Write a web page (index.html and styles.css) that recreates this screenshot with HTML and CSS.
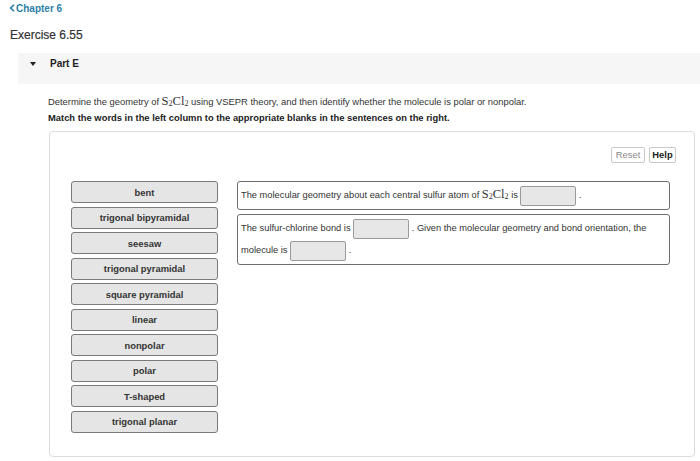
FILE: index.html
```html
<!DOCTYPE html>
<html>
<head>
<meta charset="utf-8">
<link rel="stylesheet" href="styles.css">
</head>
<body>
<div class="page">
  <a class="chapter" href="#"><svg class="chev" width="6" height="8" viewBox="0 0 6 8"><path d="M5 0.8 L1.6 4 L5 7.2" fill="none" stroke="#2e7fa9" stroke-width="1.6"/></svg>Chapter 6</a>
  <h1 class="exercise">Exercise 6.55</h1>
  <div class="part">
    <span class="tri"></span><span class="part-title">Part E</span>
  </div>
  <div class="content">
    <p class="prompt">Determine the geometry of <span class="chem">S<sub>2</sub>Cl<sub>2</sub></span> using VSEPR theory, and then identify whether the molecule is polar or nonpolar.</p>
    <p class="instr">Match the words in the left column to the appropriate blanks in the sentences on the right.</p>
    <div class="panel">
      <div class="tools">
        <button class="btn reset">Reset</button>
        <button class="btn help">Help</button>
      </div>
      <div class="work">
        <div class="words">
          <div class="word">bent</div>
          <div class="word">trigonal bipyramidal</div>
          <div class="word">seesaw</div>
          <div class="word">trigonal pyramidal</div>
          <div class="word">square pyramidal</div>
          <div class="word">linear</div>
          <div class="word">nonpolar</div>
          <div class="word">polar</div>
          <div class="word">T-shaped</div>
          <div class="word">trigonal planar</div>
        </div>
        <div class="sentences">
          <div class="sentence one"><span class="t">The molecular geometry about each central sulfur atom of <span class="chem">S<sub>2</sub>Cl<sub>2</sub></span> is </span><span class="blank"></span><span class="t"> .</span></div>
          <div class="sentence two"><span class="t">The sulfur-chlorine bond is </span><span class="blank"></span><span class="t"> . Given the molecular geometry and bond orientation, the</span> <span class="t">molecule is </span><span class="blank"></span><span class="t"> .</span></div>
        </div>
      </div>
    </div>
  </div>
</div>
</body>
</html>
```
FILE: styles.css
```css
* { box-sizing: border-box; }
html, body { margin: 0; padding: 0; background: #fff; }
body { font-family: "Liberation Sans", Arial, sans-serif; color: #333; }
.page { width: 700px; height: 461px; overflow: hidden; }

.chapter {
  display: flex; align-items: center; gap: 1px;
  margin: 2px 0 0 9px; height: 12px;
  color: #2e7fa9; font-weight: bold; font-size: 10px; text-decoration: none;
}
.chev { display: block; }

.exercise {
  margin: 14px 0 0 10px; font-size: 12px; font-weight: normal; color: #333;
  line-height: 14px; -webkit-text-stroke: 0.2px #333;
}

.part {
  margin: 11px 0 0 18px; height: 31px; background: #f6f6f6;
  display: flex; align-items: flex-start; padding: 4px 0 0 12px;
}
.tri {
  width: 0; height: 0; margin-top: 5px;
  border-left: 3px solid transparent; border-right: 3px solid transparent;
  border-top: 4px solid #222;
}
.part-title { margin-left: 14px; font-size: 10px; font-weight: bold; color: #222; line-height: 14px; }

.content { margin-left: 48px; }
.prompt { margin: 10px 0 0 0; font-size: 9.4px; line-height: 15px; height: 15px; color: #333; }
.instr { margin: 3px 0 0 0; font-size: 9.4px; font-weight: bold; line-height: 12px; height: 12px; color: #222; }
.chem { font-family: "Liberation Serif", "Times New Roman", serif; font-size: 12.5px; line-height: 1; }
.chem sub { font-size: 8px; vertical-align: -1px; line-height: 1; }

.panel {
  margin: 7px 0 0 1px; width: 646px; height: 326px;
  border: 1px solid #dcdcdc; border-radius: 4px;
  padding: 15px 18px 0 21px;
}
.tools { display: flex; justify-content: flex-end; gap: 4px; }
.btn {
  height: 16px; padding: 0 2px; font-family: inherit; font-size: 9.4px;
  background: #fff; border: 1px solid #c8c8c8; border-radius: 2px;
  line-height: 14px;
}
.reset { color: #8a8a8a; width: 34px; }
.help { color: #222; font-weight: bold; width: 27px; }

.work { display: flex; gap: 19px; margin-top: 18px; padding-right: 6px; }
.words { width: 147px; display: flex; flex-direction: column; gap: 3.56px; }
.word {
  height: 22px; background: #e5e5e5; border: 1.5px solid #7a7a7a; border-radius: 3px;
  display: flex; align-items: center; justify-content: center;
  font-size: 9.4px; font-weight: bold; color: #333;
}
.sentences { flex: 1; display: flex; flex-direction: column; gap: 4px; }
.sentence {
  border: 1.5px solid #6d6d6d; border-radius: 3px;
  font-size: 9.3px; color: #333; padding: 2px 3px 2px 3px; line-height: 22px;
}
.t { line-height: 12px; }
.one { height: 29px; }
.two { height: 51px; padding-top: 2px; }
.blank {
  display: inline-block; width: 56px; height: 20px; vertical-align: middle;
  background: #e7e7e7; border: 1px solid #9a9a9a; border-radius: 2px;
}
```
